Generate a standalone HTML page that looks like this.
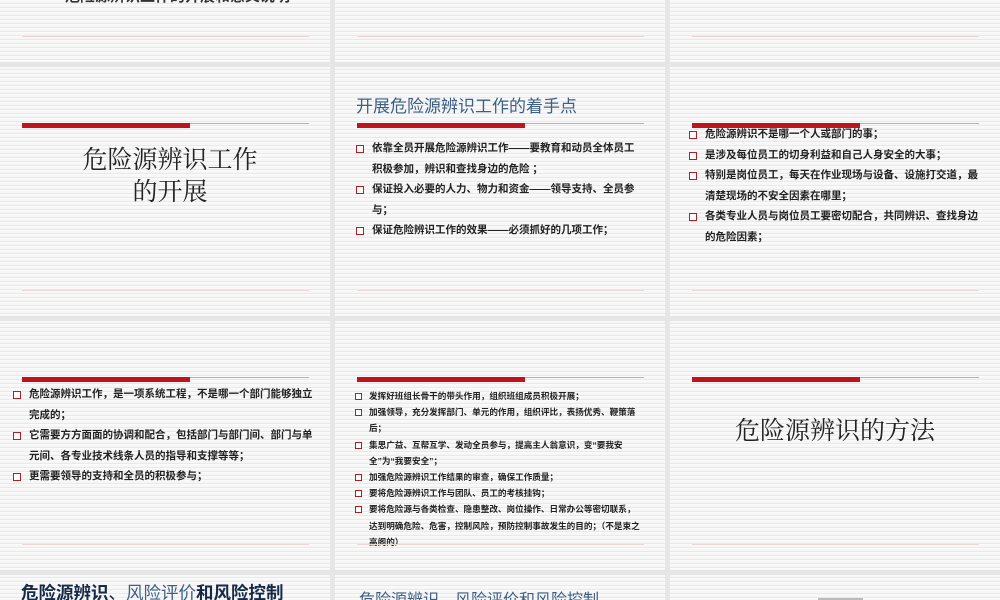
<!DOCTYPE html>
<html style="width:1000px;height:600px;overflow:hidden"><head><meta charset="utf-8"><style>
*{margin:0;padding:0;box-sizing:border-box}
body{width:1000px;height:600px;overflow:hidden;background:#e6e6e6;position:relative;font-family:"Liberation Sans","Noto Sans CJK SC",sans-serif;color:#1a1a1a}
.s{position:absolute;width:330px;height:249px;overflow:hidden;background:repeating-linear-gradient(180deg,#f7f7f7 0px,#f7f7f7 2px,#e9e9e9 2px,#e9e9e9 3px,#fbfbfb 3px,#fbfbfb 4px)}
.rb{position:absolute;left:22px;top:56px;width:168px;height:5px;background:#c0141c}
.rt{position:absolute;left:22px;top:56px;width:287px;height:1px;background:#e0a0a0}
.bl{position:absolute;left:22px;top:223px;width:287px;height:1px;background:#ead8d6}
.t{position:absolute;white-space:nowrap}
ul{position:absolute;list-style:none}
li{position:relative;font-weight:bold;color:#222}
li:before{content:"";position:absolute;border:1px solid #b02020;background:#fff}
.m li{font-size:10.5px;line-height:20.5px;padding-left:16px}
.m li:before{left:0;top:7px;width:6px;height:6px}
.sm li{font-size:8.6px;line-height:16.2px;padding-left:14px}
.sm li:before{left:0;top:5px;width:5px;height:5px}
</style></head><body>

<!-- row1 -->
<div class="s" style="left:0;top:-187px"><div class="t" style="left:65px;top:172px;font-size:15px;color:#333;font-weight:bold">危险源辨识工作的开展和意义说明</div><div class="bl"></div></div>
<div class="s" style="left:335px;top:-187px"><div class="bl"></div></div>
<div class="s" style="left:670px;top:-187px"><div class="bl"></div></div>

<!-- row2 -->
<div class="s" style="left:0;top:67px"><div class="rt"></div><div class="rb"></div>
<div class="t" style="left:0;width:340px;text-align:center;top:78px;font-size:25px;line-height:32px;font-family:'Liberation Serif','Noto Serif CJK SC',serif;color:#222">危险源辨识工作<br>的开展</div>
<div class="bl"></div></div>

<div class="s" style="left:335px;top:67px">
<div class="t" style="left:21px;top:25px;font-size:17px;color:#3d5f86">开展危险源辨识工作的着手点</div>
<div class="rt"></div><div class="rb"></div>
<ul class="m" style="left:21px;top:71px;width:284px">
<li>依靠全员开展危险源辨识工作——要教育和动员全体员工积极参加，辨识和查找身边的危险 ；</li>
<li>保证投入必要的人力、物力和资金——领导支持、全员参与；</li>
<li>保证危险辨识工作的效果——必须抓好的几项工作；</li></ul>
<div class="bl"></div></div>

<div class="s" style="left:670px;top:67px"><div class="rt"></div><div class="rb"></div>
<ul class="m" style="left:19px;top:57px;width:296px">
<li>危险源辨识不是哪一个人或部门的事；</li>
<li>是涉及每位员工的切身利益和自己人身安全的大事；</li>
<li>特别是岗位员工，每天在作业现场与设备、设施打交道，最清楚现场的不安全因素在哪里；</li>
<li>各类专业人员与岗位员工要密切配合，共同辨识、查找身边的危险因素；</li></ul>
<div class="bl"></div></div>

<!-- row3 -->
<div class="s" style="left:0;top:321px"><div class="rt"></div><div class="rb"></div>
<ul class="m" style="left:13px;top:63px;width:305px">
<li>危险源辨识工作，是一项系统工程，不是哪一个部门能够独立完成的；</li>
<li>它需要方方面面的协调和配合，包括部门与部门间、部门与单元间、各专业技术线条人员的指导和支撑等等；</li>
<li>更需要领导的支持和全员的积极参与；</li></ul>
<div class="bl"></div></div>

<div class="s" style="left:335px;top:321px"><div class="rt"></div><div class="rb"></div>
<ul class="sm" style="left:20px;top:67px;width:286px">
<li>发挥好班组长骨干的带头作用，组织班组成员积极开展；</li>
<li>加强领导，充分发挥部门、单元的作用，组织评比，表扬优秀、鞭策落后；</li>
<li>集思广益、互帮互学、发动全员参与，提高主人翁意识，变“要我安全”为“我要安全”；</li>
<li>加强危险源辨识工作结果的审查，确保工作质量；</li>
<li>要将危险源辨识工作与团队、员工的考核挂钩；</li>
<li>要将危险源与各类检查、隐患整改、岗位操作、日常办公等密切联系，达到明确危险、危害，控制风险，预防控制事故发生的目的；（不是束之高阁的）</li></ul>
<div class="bl"></div></div>

<div class="s" style="left:670px;top:321px"><div class="rt"></div><div class="rb"></div>
<div class="t" style="left:0;width:330px;text-align:center;top:90px;font-size:25px;font-family:'Liberation Serif','Noto Serif CJK SC',serif;color:#222">危险源辨识的方法</div>
<div class="bl"></div></div>

<!-- row4 -->
<div class="s" style="left:0;top:575px;height:25px"><div class="t" style="left:21px;top:5px;font-size:17.5px;color:#152a48"><b>危险源辨识</b>、<span style="color:#3d5f86">风险评价</span><b>和风险控制</b></div></div>
<div class="s" style="left:335px;top:575px;height:25px"><div class="t" style="left:24px;top:11px;font-size:16px;color:#3d5f86">危险源辨识、风险评价和风险控制</div></div>
<div class="s" style="left:670px;top:575px;height:25px"><div style="position:absolute;left:148px;top:23px;width:45px;height:2px;background:#bbb"></div></div>
</body></html>
